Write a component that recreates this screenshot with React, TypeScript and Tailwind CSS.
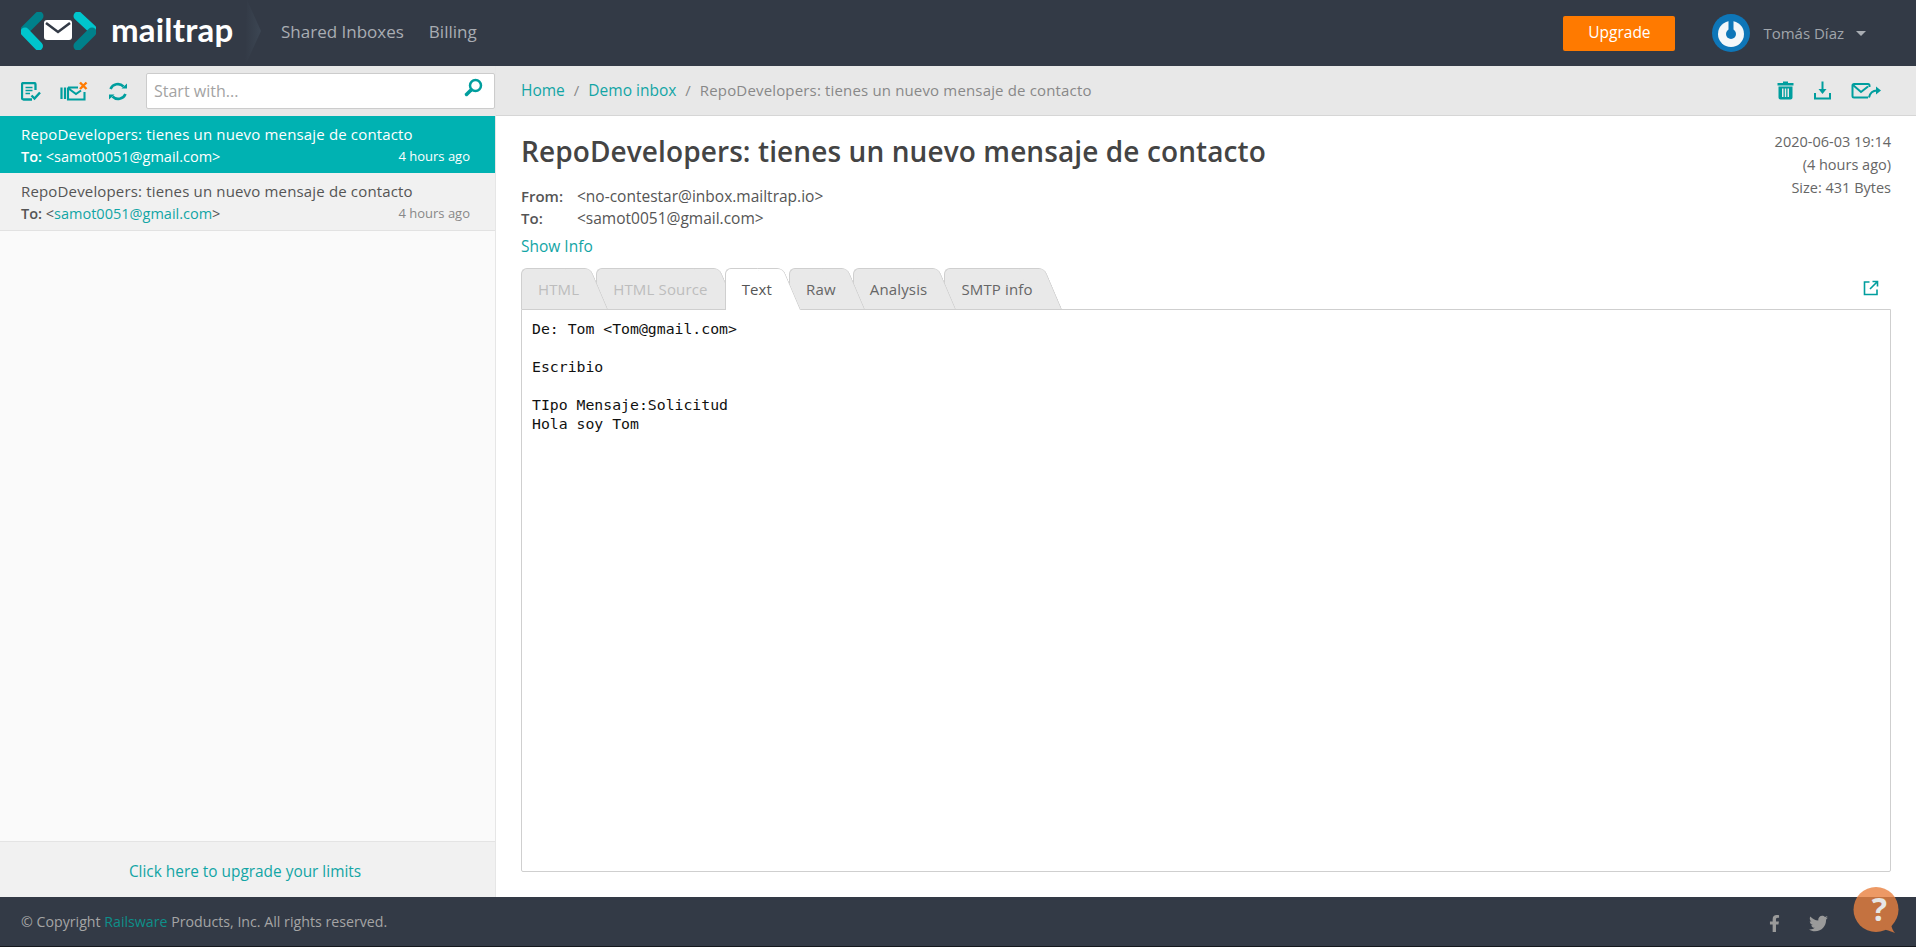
import { FaFacebookF, FaTwitter } from "react-icons/fa";

const sans = "font-['Open_Sans',sans-serif]";

function Logo() {
  return (
    <div className="flex items-center pl-[21px] w-[245px]">
      <svg width="75" height="38" viewBox="0 0 75 38" className="shrink-0 -mt-[5px]">
        <path d="M18 4 L4 18" stroke="#00808a" strokeWidth="9" strokeLinecap="round" />
        <path d="M4 20 L17.500 34" stroke="#00c5cc" strokeWidth="9" strokeLinecap="round" />
        <path d="M57 4 L71 17" stroke="#00c5cc" strokeWidth="9" strokeLinecap="round" />
        <path d="M71 20 L57 34" stroke="#00808a" strokeWidth="9" strokeLinecap="round" />
        <rect x="23" y="8" width="28" height="20" rx="3" fill="#fff" />
        <path d="M25 11 L37 20 L49 11" fill="none" stroke="#333a46" strokeWidth="2.500" />
      </svg>
      <span className="ml-[15px] font-['Lato',sans-serif] font-bold text-[33px] leading-none text-white tracking-[0.2px] -mt-[7px]">
        mailtrap
      </span>
    </div>
  );
}

function HeaderArrow() {
  return (
    <svg width="20" height="66" viewBox="0 0 20 66" className="shrink-0">
      <defs>
        <linearGradient id="arrow-fade" x1="0" x2="1" y1="0" y2="0">
          <stop offset="0" stopColor="#333a46" />
          <stop offset="1" stopColor="#3c4653" />
        </linearGradient>
      </defs>
      <path d="M2 0 L16 31 L0 66 Z" fill="url(#arrow-fade)" />
    </svg>
  );
}

function NotesIcon() {
  return (
    <svg width="20" height="19" viewBox="0 0 20 19" fill="none" stroke="#009e9e" strokeWidth="2.300">
      <path d="M11 17.500 H2.500 a1.500 1.500 0 0 1 -1.500 -1.500 V2.500 a1.500 1.500 0 0 1 1.500 -1.500 H13 a1.500 1.500 0 0 1 1.500 1.500 V8" />
      <path d="M4.500 5.500 H11.500 M4.500 8.500 H11.500 M4.500 11.500 H9" strokeWidth="1.600" />
      <path d="M10.500 13.500 L13.500 16.500 L19 10.500" strokeWidth="2.400" />
    </svg>
  );
}

function ClearIcon() {
  return (
    <svg width="28" height="20" viewBox="0 0 28 20" fill="none">
      <path d="M1.500 6.500 V18 M5 6.500 V18" stroke="#009e9e" strokeWidth="2.200" />
      <path d="M8 6.500 H18 M24.500 11 V18.500 H8 V6.500 M8.500 7.500 L16 13 L21 9.500" stroke="#009e9e" strokeWidth="2.100" />
      <path d="M20 1.500 L26.500 8 M26.500 1.500 L20 8" stroke="#ff7a00" strokeWidth="2.400" />
    </svg>
  );
}

function RefreshIcon() {
  return (
    <svg width="20" height="19" viewBox="0 0 20 19" fill="none" stroke="#009e9e" strokeWidth="2.600">
      <path d="M2.500 7 A8 8 0 0 1 15.500 4.500" />
      <path d="M17.500 12 A8 8 0 0 1 4.500 14.500" />
      <path d="M13.500 6.500 H19 V1.500 Z M6.500 12.500 H1 V17.500 Z" fill="#009e9e" stroke="none" />
    </svg>
  );
}

function TrashIcon() {
  return (
    <svg width="17" height="19" viewBox="0 0 17 19" fill="#009e9e">
      <path d="M6 0.500 H11 V2 H16.500 V4.500 H0.500 V2 H6 Z" />
      <path d="M1.500 5.500 H15.500 V16.500 a2 2 0 0 1 -2 2 H3.500 a2 2 0 0 1 -2 -2 Z M5 7.500 V16 H6.500 V7.500 Z M7.800 7.500 V16 H9.200 V7.500 Z M10.500 7.500 V16 H12 V7.500 Z" fillRule="evenodd" />
    </svg>
  );
}

function DownloadIcon() {
  return (
    <svg width="17" height="19" viewBox="0 0 17 19" fill="none" stroke="#009e9e" strokeWidth="2">
      <path d="M1 12 V17.500 H16 V12" />
      <path d="M8.500 0.500 V9" />
      <path d="M4.500 8 H12.500 L8.500 13 Z" fill="#009e9e" stroke="none" />
    </svg>
  );
}

function ForwardIcon() {
  return (
    <svg width="30" height="16" viewBox="0 0 30 16" fill="none" stroke="#009e9e" strokeWidth="2">
      <path d="M17 14.500 H3 a1.500 1.500 0 0 1 -1.500 -1.500 V2.500 a1.500 1.500 0 0 1 1.500 -1.500 H17 a1.500 1.500 0 0 1 1.500 1.500 V4" />
      <path d="M2 2 L10 9 L17 3.500" />
      <path d="M18 14.500 C19 10 21 7.500 26 7.500" />
      <path d="M25 3.500 L30 7.500 L25 11.500 Z" fill="#009e9e" stroke="none" />
    </svg>
  );
}

function Avatar() {
  return (
    <svg width="38" height="38" viewBox="0 0 38 38">
      <circle cx="19" cy="19" r="19" fill="#0e76b8" />
      <circle cx="19" cy="20" r="13" fill="#f4f7f9" />
      <circle cx="19" cy="20" r="5" fill="#0e76b8" />
      <path d="M19 5 V20" stroke="#0e76b8" strokeWidth="5" strokeLinecap="round" />
    </svg>
  );
}

function MessageRow({ active }: { active?: boolean }) {
  return (
    <div
      className={
        active
          ? "h-[57px] bg-[#00b2b2] text-white pl-[21px] pr-[25px] pt-[7px]"
          : "h-[58px] bg-[#f1f1f1] text-[#555] border-b border-[#e2e2e2] pl-[21px] pr-[25px] pt-[7px]"
      }
    >
      <div className="text-[15px] leading-[23px] tracking-[0.16px]">
        RepoDevelopers: tienes un nuevo mensaje de contacto
      </div>
      <div className="flex items-center justify-between text-[14.500px] leading-[21px]">
        <span>
          <b className="font-semibold">To:</b> &lt;
          <span className={active ? "" : "text-[#12a5a5]"}>samot0051@gmail.com</span>&gt;
        </span>
        <span className={active ? "text-[13px]" : "text-[13px] text-[#888]"}>4 hours ago</span>
      </div>
    </div>
  );
}

function Tab({
  label,
  active,
  disabled,
  z,
}: {
  label: string;
  active?: boolean;
  disabled?: boolean;
  z: string;
}) {
  const fill = active ? "bg-white -bottom-px" : "bg-[#e9e9e9] bottom-0";
  const color = active ? "text-[#555]" : disabled ? "text-[#bdbdbd]" : "text-[#666]";
  return (
    <div className={`relative h-[41px] pl-[17px] pr-[17px] ${z}`}>
      <span className={`absolute left-0 top-0 right-[14px] rounded-tl-[6px] border-l border-t border-[#cfcfcf] ${fill}`} />
      <span
        className={`absolute -right-[12px] top-0 w-[26px] origin-bottom-right skew-x-[23deg] rounded-tr-[6px] border-r border-t border-[#cfcfcf] ${fill}`}
      />
      <span className={`relative block text-[15px] leading-[41px] pt-[1px] tracking-[0.15px] ${color}`}>{label}</span>
    </div>
  );
}

export default function App() {
  return (
    <div className={`relative flex h-[947px] w-full flex-col overflow-hidden bg-white ${sans}`}>
      <header className="flex h-[66px] shrink-0 items-center bg-[#333a46]">
        <Logo />
        <HeaderArrow />
        <nav className="ml-[16px] -mt-[2px] flex gap-[25px] text-[17px] font-medium text-[#a9adb3]">
          <span>Shared Inboxes</span>
          <span>Billing</span>
        </nav>
        <div className="ml-auto flex items-center pr-[50px]">
          <button className="h-[35px] w-[112px] rounded-[2px] bg-[#ff7a00] text-[15.500px] text-white">
            Upgrade
          </button>
          <div className="ml-[37px]">
            <Avatar />
          </div>
          <span className="ml-[13px] text-[15px] text-[#a0a5ab]">Tomás Díaz</span>
          <span className="ml-[12px] h-0 w-0 border-x-[5px] border-t-[5px] border-x-transparent border-t-[#a9adb3]" />
        </div>
      </header>

      <div className="flex min-h-0 flex-1">
        <aside className="flex w-[496px] shrink-0 flex-col border-r border-[#e6e6e6] bg-[#fafafa]">
          <div className="flex h-[50px] shrink-0 items-center bg-[#e8e8e8] pl-[21px]">
            <NotesIcon />
            <span className="ml-[19px]">
              <ClearIcon />
            </span>
            <span className="ml-[20px]">
              <RefreshIcon />
            </span>
            <div className="relative ml-[18px] flex h-[36px] w-[349px] items-center rounded-[2px] border border-[#cccccc] bg-white pl-[7px]">
              <span className="text-[16px] text-[#a3a3a3]">Start with...</span>
              <svg width="20" height="20" viewBox="0 0 20 20" fill="none" stroke="#009e9e" className="absolute right-[10px] top-[4px]">
                <circle cx="11.500" cy="7.500" r="5.500" strokeWidth="2.500" />
                <path d="M7 12 L2.500 16.500" strokeWidth="3.500" strokeLinecap="round" />
              </svg>
            </div>
          </div>
          <MessageRow active />
          <MessageRow />
          <div className="flex-1" />
          <div className="flex h-[56px] shrink-0 items-center justify-center border-t border-[#e4e4e4] bg-[#f1f1f1] pt-[5px] pr-[5px] text-[15.400px] text-[#12a5a5]">
            Click here to upgrade your limits
          </div>
        </aside>

        <main className="flex min-w-0 flex-1 flex-col">
          <div className="flex h-[50px] shrink-0 items-center border-b border-[#d6d6d6] bg-[#e8e8e8] pl-[25px] pr-[35px] text-[15px]">
            <span className="text-[15.500px] text-[#12a5a5]">Home</span>
            <span className="mx-[9px] text-[#888]">/</span>
            <span className="text-[15.500px] text-[#12a5a5]">Demo inbox</span>
            <span className="mx-[9px] text-[#888]">/</span>
            <span className="text-[#888] tracking-[0.16px]">RepoDevelopers: tienes un nuevo mensaje de contacto</span>
            <div className="ml-auto flex items-center gap-[20px]">
              <TrashIcon />
              <DownloadIcon />
              <ForwardIcon />
            </div>
          </div>

          <div className="flex min-h-0 flex-1 flex-col px-[25px] pb-[25px]">
            <div className="flex justify-between">
              <div>
                <h1 className="mt-[15px] text-[28px] font-semibold leading-[40px] text-[#444] tracking-[0.1px]">
                  RepoDevelopers: tienes un nuevo mensaje de contacto
                </h1>
                <div className="mt-[14px] flex text-[15.500px] leading-[22px] text-[#555]">
                  <b className="w-[56px] text-[15px] font-semibold">From:</b>
                  <span>&lt;no-contestar@inbox.mailtrap.io&gt;</span>
                </div>
                <div className="flex text-[15.500px] leading-[22px] text-[#555]">
                  <b className="w-[56px] text-[15px] font-semibold">To:</b>
                  <span>&lt;samot0051@gmail.com&gt;</span>
                </div>
                <div className="mt-[6px] text-[15.500px] leading-[22px] text-[#12a5a5]">Show Info</div>
              </div>
              <div className="pt-[14px] text-right text-[14.500px] leading-[23px] text-[#666]">
                <div>2020-06-03 19:14</div>
                <div>(4 hours ago)</div>
                <div>Size: 431 Bytes</div>
              </div>
            </div>

            <div className="mt-[11px] flex items-end justify-between">
              <div className="flex">
                <Tab label="HTML" disabled z="z-[6]" />
                <Tab label="HTML Source" disabled z="z-[5]" />
                <Tab label="Text" active z="z-[7]" />
                <Tab label="Raw" z="z-[4]" />
                <Tab label="Analysis" z="z-[3]" />
                <Tab label="SMTP info" z="z-[2]" />
              </div>
              <svg width="16" height="16" viewBox="0 0 16 16" fill="none" stroke="#009e9e" strokeWidth="1.600" className="mb-[13px] mr-[12px]">
                <path d="M6.500 2 H1.500 V14.500 H14 V9.500" />
                <path d="M9.500 1.500 H14.500 V6.500 M14 2 L7 9" />
              </svg>
            </div>

            <pre className="relative z-[1] min-h-0 flex-1 rounded-b-[2px] border border-[#cfcfcf] px-[10px] pt-[9px] font-['DejaVu_Sans_Mono',monospace] text-[14.800px] leading-[19px] text-[#111]">
              {"De: Tom <Tom@gmail.com>\n\nEscribio\n\nTIpo Mensaje:Solicitud\nHola soy Tom"}
            </pre>
          </div>
        </main>
      </div>

      <footer className="flex h-[50px] shrink-0 items-center border-b border-[#15181d] bg-[#333a46] pl-[21px] pr-[88px] text-[14.200px] text-[#a5a5a5]">
        <span>
          © Copyright <span className="text-[#0e8f8a]">Railsware</span> Products, Inc. All rights reserved.
        </span>
        <div className="ml-auto flex items-center gap-[26px] pt-[4px] text-[#9a9a9a]">
          <FaFacebookF size={17} />
          <FaTwitter size={19} />
        </div>
      </footer>

      {/* help bubble sits over the footer edge */}
      <div className="absolute right-[16px] top-[887px] h-[47px] w-[48px] opacity-80">
        <svg width="48" height="47" viewBox="0 0 48 47">
          <circle cx="24" cy="22.500" r="22.500" fill="#e9803f" />
          <path d="M28 40 C32 43 36 43 43 46 C39 41 39 37 39 34 Z" fill="#e9803f" />
        </svg>
      </div>
      <span className="absolute right-[29px] top-[889px] font-['Open_Sans',sans-serif] text-[32px] font-bold leading-[40px] text-[#e6e6e6]">
        ?
      </span>
    </div>
  );
}
